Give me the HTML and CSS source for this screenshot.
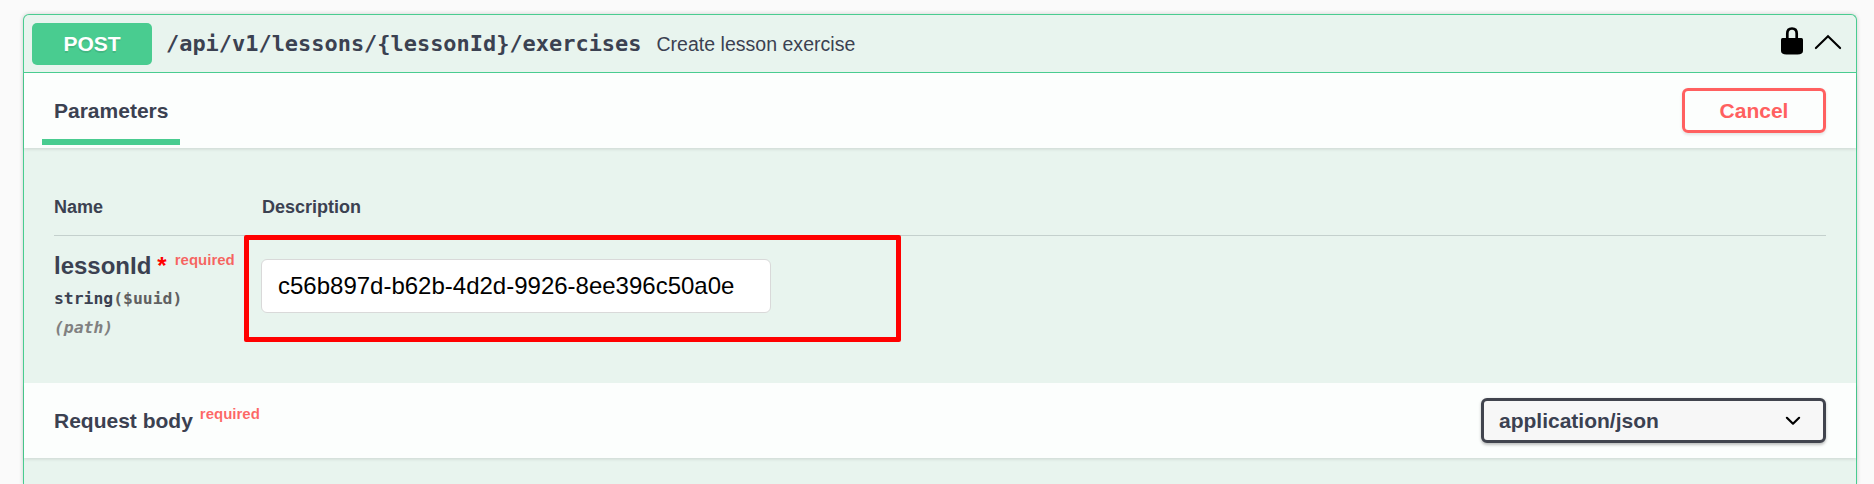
FILE: index.html
```html
<!DOCTYPE html>
<html lang="en">
<head>
<meta charset="utf-8">
<title>Create lesson exercise</title>
<link rel="stylesheet" href="styles.css">
</head>
<body>
<main class="opblock">
  <header class="summary">
    <span class="method">POST</span>
    <span class="path">/api/v1/lessons/{lessonId}/exercises</span>
    <span class="summary-text">Create lesson exercise</span>
    <svg class="lock" viewBox="0 0 22 28" width="22" height="28"><path d="M6.300 12V6.600C6.300 3.300 8.200 1.500 11 1.500S15.700 3.300 15.700 6.600V12" fill="none" stroke="#000" stroke-width="2.700"/><path d="M1.500 11H20.500Q22 11 22 12.500V24Q22 27.400 16.500 27.400H5.500Q0 27.400 0 24V12.500Q0 11 1.500 11Z"/></svg>
    <svg class="arrow" viewBox="0 0 28 16" width="28" height="16"><path d="M1.900 14.100L14 2.300L26.100 14.100" fill="none" stroke="#000" stroke-width="2.100" stroke-linecap="round"/></svg>
  </header>
  <section class="bar">
    <div class="tab">Parameters</div>
    <button class="cancel">Cancel</button>
  </section>
  <section class="params">
    <div class="row head"><span>Name</span><span class="desc">Description</span></div>
    <div class="row">
      <div class="param">
        <div class="name">lessonId<span class="star">*</span><span class="required">required</span></div>
        <div class="type">string<span class="format">($uuid)</span></div>
        <div class="in">(path)</div>
      </div>
      <input class="value" type="text" value="c56b897d-b62b-4d2d-9926-8ee396c50a0e">
    </div>
    <div class="highlight"></div>
  </section>
  <section class="bar">
    <div class="body-title">Request body<span class="required">required</span></div>
    <div class="select"><span>application/json</span><svg viewBox="0 0 16 10" width="16" height="10"><path d="M1.900 1.800L8 7.700L14.100 1.800" fill="none" stroke="#000" stroke-width="2.200" stroke-linecap="round" stroke-linejoin="round"/></svg></div>
  </section>
</main>
</body>
</html>
```
FILE: styles.css
```css
* { box-sizing: border-box; }
body {
  margin: 0;
  height: 484px;
  overflow: hidden;
  padding: 14px 17px 0 23px;
  background: #fafafa;
  color: #3b4151;
  font-family: "Liberation Sans", Arial, sans-serif;
}
.opblock {
  height: 470px;
  border: 1px solid #49cc90;
  border-bottom: 0;
  border-radius: 6px 6px 0 0;
  background: #e8f4ee;
  box-shadow: 0 0 4px rgba(0, 0, 0, .19);
}
.summary {
  display: flex;
  align-items: center;
  height: 58px;
  padding: 8px 14px 7px 8px;
  border-bottom: 1px solid #49cc90;
}
.method {
  width: 120px;
  height: 42px;
  border-radius: 5px;
  background: #49cc90;
  color: #fff;
  font-size: 21px;
  font-weight: 700;
  line-height: 42px;
  text-align: center;
  text-shadow: 0 1.5px 0 rgba(0, 0, 0, .1);
}
.path {
  margin-left: 14px;
  font: 700 21.950px/28px "DejaVu Sans Mono", monospace;
}
.summary-text { margin-left: 15px; font-size: 19.500px; letter-spacing: .02px; }
.lock { margin: -6px 0 0 auto; }
.arrow { margin: -4px 0 0 11px; }
.bar {
  display: flex;
  align-items: center;
  justify-content: space-between;
  height: 75px;
  padding: 0 30px;
  background: rgba(255, 255, 255, .86);
  box-shadow: 0 1.500px 3px rgba(0, 0, 0, .1);
  font-size: 21px;
  font-weight: 700;
}
.tab {
  align-self: flex-end;
  height: 69px;
  width: 138px;
  margin: 0 0 3px -12px;
  padding-left: 12px;
  border-bottom: 6px solid #49cc90;
  line-height: 69px;
}
.cancel {
  width: 144px;
  height: 45px;
  padding: 0;
  border: 3px solid #ff6060;
  border-radius: 6px;
  background: transparent;
  box-shadow: 0 1.500px 3px rgba(0, 0, 0, .1);
  color: #ff6060;
  font: 700 21px "Liberation Sans", Arial, sans-serif;
}
.params { position: relative; height: 235px; padding: 42px 30px 0; }
.row { display: grid; grid-template-columns: 207px 1fr; }
.head {
  height: 46px;
  border-bottom: 1px solid #c4d0cd;
  font-size: 18px;
  font-weight: 700;
  line-height: 34px;
}
.desc { padding-left: 1px; }
.param { padding-top: 16px; }
.name { height: 32px; font-size: 24px; font-weight: 700; line-height: 28px; white-space: nowrap; }
.star { margin-left: 6px; color: #f00; }
.required {
  display: inline-block;
  margin-left: 8px;
  color: rgba(255, 0, 0, .6);
  font-size: 15px;
  line-height: 15px;
  transform: translateY(-9px);
}
.body-title .required { margin-left: 7px; }
.type, .in { font: 700 16.400px/29px "DejaVu Sans Mono", monospace; }
.format { color: #606060; }
.in { color: #808080; font-style: italic; }
.value {
  width: 510px;
  height: 54px;
  margin-top: 23px;
  padding: 0 15px 0 16px;
  border: 1px solid #d9d9d9;
  border-radius: 6px;
  background: #fff;
  color: #000;
  font: 24px "Liberation Sans", Arial, sans-serif;
}
.highlight {
  position: absolute;
  left: 220px;
  top: 87px;
  width: 657px;
  height: 107px;
  border: 5px solid #f00;
  border-radius: 2px;
}
.select {
  display: flex;
  align-items: center;
  justify-content: space-between;
  width: 345px;
  height: 45px;
  padding: 0 22px 0 15px;
  border: 3px solid #41444e;
  border-radius: 6px;
  background: #f7f7f7;
  box-shadow: 0 1.500px 3px rgba(0, 0, 0, .25);
}
```
